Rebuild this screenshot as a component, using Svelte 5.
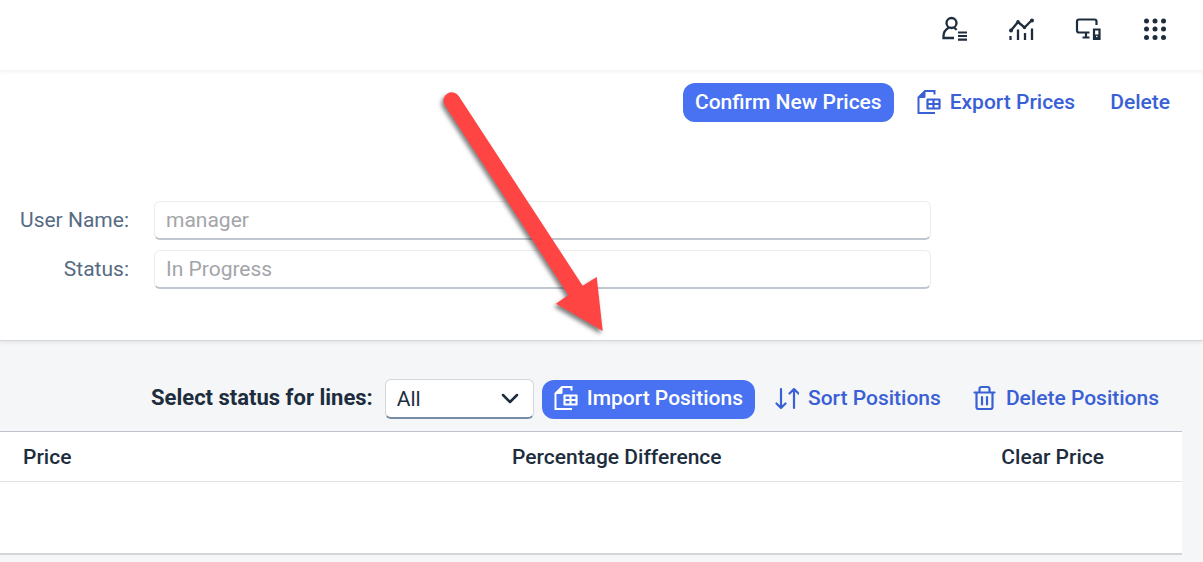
<script>
  let status = $state('All');
  const columns = ['Price', 'Percentage Difference', 'Clear Price'];
</script>

{#snippet sheet()}
  <svg class="icon" viewBox="0 0 24 26" aria-hidden="true">
    <path d="M17.500 5.500V2H8L1.500 8.500V24H18" fill="none" stroke="currentColor" stroke-width="2" />
    <path d="M1 9L8.500 1.500V7.500q0 1.500-1.500 1.500Z" fill="currentColor" />
    <path d="M10.500 10.500h12v9h-12ZM16.500 10.500v9M10.500 15h12" fill="none" stroke="currentColor" stroke-width="2.200" stroke-linejoin="round" />
  </svg>
{/snippet}

<header class="shell">
  <button aria-label="User settings">
    <svg viewBox="0 0 26 26" fill="none" stroke="currentColor" stroke-width="2.300">
      <circle cx="10.500" cy="7" r="5" />
      <path d="M13 22H2.500v-2c0-4 2-6.500 5.500-8.500M12.500 11.500q2 .8 3 2.500" />
      <path d="M17 16.500h9M17 20h9M17 23.700h9" stroke-width="2.200" />
    </svg>
  </button>
  <button aria-label="Analytics">
    <svg viewBox="0 0 26 26" fill="none" stroke="currentColor" stroke-width="2.300">
      <path d="M3 14.500L10 6l6.500 5.500 7.500-7.500" />
      <path d="M2.500 20v4M10 13.500V24M17 17v7M24 12.500V24" />
      <g fill="currentColor" stroke="none"><circle cx="3" cy="14.500" r="2" /><circle cx="10" cy="5.800" r="1.700" /><circle cx="16.500" cy="11.500" r="1.700" /><circle cx="24" cy="4.500" r="2" /></g>
    </svg>
  </button>
  <button aria-label="Devices">
    <svg viewBox="0 0 26 26" fill="none" stroke="currentColor" stroke-width="2.200">
      <path d="M14.500 16.500H4Q2 16.500 2 14.500V5.500Q2 3.500 4 3.500H19.500Q21.500 3.500 21.500 5.500V9M11 16.500v4.500M7.500 21.500h7" />
      <path d="M19 13.500h5.500v9.500H19Z" />
      <path d="M18.500 18.500h6v5h-6Z" fill="currentColor" stroke="none" /><circle cx="21.800" cy="20.500" r=".8" fill="#fff" stroke="none" />
    </svg>
  </button>
  <button aria-label="Products">
    <svg viewBox="0 0 26 26" fill="currentColor">
      {#each [5, 13, 21.5] as y}
        {#each [4.5, 13, 21.5] as x}
          <circle cx={x} cy={y} r="2.500" />
        {/each}
      {/each}
    </svg>
  </button>
</header>

<main>
  <section class="details">
    <div class="actions">
      <button class="btn primary">Confirm New Prices</button>
      <button class="btn">{@render sheet()}<span>Export Prices</span></button>
      <button class="btn">Delete</button>
    </div>
    <form class="fields">
      <label for="user">User Name:</label>
      <input id="user" value="manager" readonly />
      <label for="state">Status:</label>
      <input id="state" value="In Progress" readonly />
    </form>
    <svg class="arrow" viewBox="0 0 180 260" aria-hidden="true">
      <path d="M4.700 15.100A8.350 8.350 0 0 1 18.700 6L142.700 195.700 156.700 187 162.700 241 116 213.700 128.300 205Z" fill="#ff4444" />
    </svg>
  </section>

  <section class="positions">
    <div class="toolbar">
      <label for="lines">Select status for lines:</label>
      <div class="select">
        <select id="lines" bind:value={status}>
          <option>All</option>
          <option>New</option>
          <option>Confirmed</option>
        </select>
        <svg viewBox="0 0 18 12" aria-hidden="true"><path d="M2 2l7 7 7-7" fill="none" stroke="currentColor" stroke-width="2.500" stroke-linecap="round" stroke-linejoin="round" /></svg>
      </div>
      <button class="btn primary">{@render sheet()}<span>Import Positions</span></button>
      <button class="btn">
        <svg class="icon" viewBox="0 0 24 26" fill="none" stroke="currentColor" stroke-width="2.200" stroke-linecap="round" stroke-linejoin="round" aria-hidden="true">
          <path d="M6 4v19M1.500 18.500L6 23l4.500-4.500M19 23V4M14.500 8.500L19 4l4.500 4.500" />
        </svg><span>Sort Positions</span>
      </button>
      <button class="btn">
        <svg class="icon" viewBox="0 0 24 26" fill="none" stroke="currentColor" stroke-width="2.200" stroke-linecap="round" stroke-linejoin="round" aria-hidden="true">
          <path d="M1.500 7.500h20M6.500 7V4q0-2 2-2h6q2 0 2 2v3M3.500 8v14q0 2 2 2h12q2 0 2-2V8M9 12v7.500M14 12v7.500" />
        </svg><span>Delete Positions</span>
      </button>
    </div>
    <table>
      <thead>
        <tr>{#each columns as column}<th scope="col">{column}</th>{/each}</tr>
      </thead>
      <tbody>
        <tr>{#each columns as _}<td></td>{/each}</tr>
      </tbody>
    </table>
  </section>
</main>

<style>
  :global(body) {
    margin: 0;
    background: #f5f6f7;
  }
  .shell, main {
    font-family: Roboto, "Liberation Sans", sans-serif;
    font-size: 21px;
    line-height: 24px;
    color: #1d2d3e;
  }
  button, input, select {
    box-sizing: border-box;
    font: inherit;
    color: inherit;
    margin: 0;
  }
  button {
    display: flex;
    align-items: center;
    padding: 0;
    border: 0;
    background: none;
    cursor: pointer;
  }
  .shell {
    display: flex;
    justify-content: flex-end;
    align-items: center;
    gap: 41px;
    height: 70px;
    box-sizing: border-box;
    padding: 0 35px 12px 0;
    background: #fff;
  }
  .shell svg {
    display: block;
    width: 26px;
    height: 26px;
    overflow: visible;
  }
  .details {
    position: relative;
    padding: 13px 21px 51px 0;
    background: #fff;
    border-bottom: 1px solid #d5d7d9;
    box-shadow: inset 0 4px 4px -2px #f2f2f2, 0 2px 3px #e6e8ea;
  }
  .actions {
    display: flex;
    justify-content: flex-end;
    gap: 11px;
  }
  .btn {
    height: 39px;
    padding: 0 12px 2px;
    gap: 9px;
    border-radius: 12px;
    color: #3a60d5;
    font-weight: 500;
    white-space: nowrap;
  }
  .primary {
    background: #4872f1;
    color: #fff;
  }
  .icon {
    width: 24px;
    height: 26px;
  }
  .fields {
    display: grid;
    grid-template-columns: 129px 1fr;
    gap: 10px 25px;
    align-items: center;
    margin: 79px 251px 0 0;
  }
  .fields label {
    padding-bottom: 2px;
    text-align: right;
    color: #556b82;
  }
  .fields input {
    width: 100%;
    height: 39px;
    padding: 0 11px;
    border: 1px solid #ececee;
    border-bottom: 2px solid #c0c6cf;
    border-radius: 6px;
    background: #fff;
    color: #a3a5a9;
    outline: none;
  }
  .arrow {
    position: absolute;
    left: 440px;
    top: 20px;
    width: 180px;
    height: 260px;
    filter: drop-shadow(-2px 3px 2px rgb(0 0 0 / .5));
    pointer-events: none;
  }
  .positions {
    padding: 38px 21px 8px 0;
  }
  .toolbar {
    display: flex;
    justify-content: flex-end;
    align-items: center;
    gap: 8px;
    padding: 0 11px 12px 0;
  }
  .toolbar label {
    padding: 0 4px 2px 0;
    font-size: 22px;
    font-weight: 700;
  }
  .select {
    position: relative;
    width: 149px;
  }
  .select select {
    display: block;
    width: 100%;
    height: 40px;
    padding: 0 11px;
    appearance: none;
    border: 1px solid #d3d6da;
    border-bottom: 2px solid #758ca4;
    border-radius: 6px;
    background: #fff;
  }
  .select svg {
    position: absolute;
    right: 15px;
    top: 14px;
    width: 18px;
    height: 12px;
    pointer-events: none;
  }
  table {
    width: 100%;
    table-layout: fixed;
    border-collapse: collapse;
    background: #fff;
    border-top: 1px solid #bcc3ca;
    border-bottom: 2px solid #d3d6d9;
  }
  th {
    width: 41.400%;
    height: 50px;
    padding: 0 12px;
    box-sizing: border-box;
    text-align: left;
    font-weight: 500;
    border-bottom: 1px solid #dfe1e3;
  }
  th:first-child {
    width: 42.300%;
    padding-left: 23px;
  }
  th:last-child {
    width: auto;
  }
  td {
    height: 71px;
    padding: 0;
  }
</style>
